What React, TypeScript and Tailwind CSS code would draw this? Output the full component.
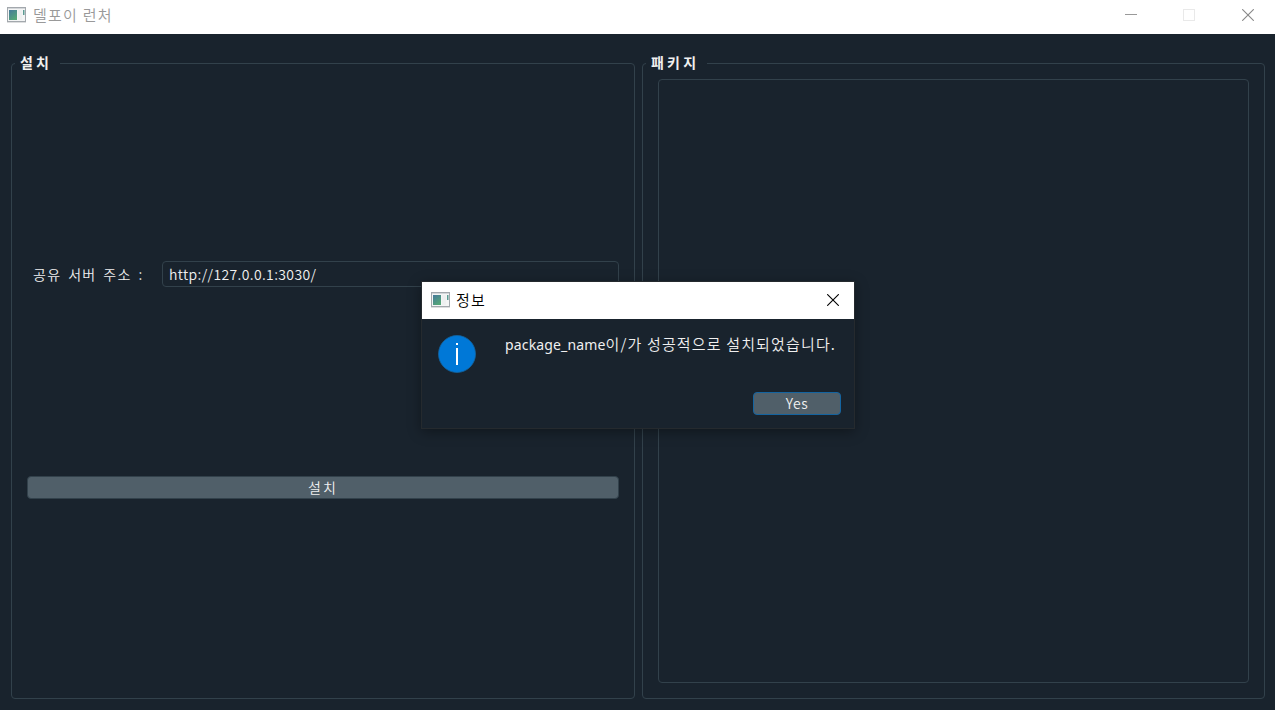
import type { ReactNode } from "react";

function AppIcon() {
  return (
    <svg width="20" height="17" viewBox="0 0 20 17" className="shrink-0" aria-hidden="true">
      <defs>
        <linearGradient id="pane" x1="0" y1="0" x2="0.6" y2="1">
          <stop offset="0" stopColor="#46799b" />
          <stop offset="1" stopColor="#55a678" />
        </linearGradient>
      </defs>
      <rect x="0" y="15" width="19" height="1" fill="#dddedf" />
      <rect x="0.5" y="0.5" width="18" height="14" fill="#f4f5f5" stroke="#a3a8ad" />
      <rect x="1" y="1" width="17" height="1" fill="#d3d6d9" />
      <rect x="2" y="3" width="8" height="10" fill="url(#pane)" />
      <rect x="11" y="3" width="4" height="10" fill="#eef0f0" />
      <rect x="16" y="3" width="1.5" height="5" fill="#5c9c93" />
    </svg>
  );
}

function CloseIcon({ color }: { color: string }) {
  return (
    <svg width="12" height="12" viewBox="0 0 12 12" fill="none" stroke={color} strokeWidth="1.1" aria-hidden="true">
      <path d="M0.2 0.2 11.8 11.8M11.8 0.2 0.2 11.8" />
    </svg>
  );
}

function GroupBox({ title, legend, className, children }: { title: string; legend: string; className: string; children: ReactNode }) {
  return (
    <section className={`flex h-[636px] flex-col rounded border border-[#32414b] ${className}`}>
      <h2 className={`-mt-[12px] ml-[3px] h-[23px] shrink-0 whitespace-nowrap bg-[#19232d] pl-[5px] text-[14px] leading-[20px] font-bold text-[#f0f0f0] ${legend}`}>
        {title}
      </h2>
      {children}
    </section>
  );
}

export default function App() {
  return (
    <div className="relative flex h-[710px] w-[1275px] flex-col overflow-hidden bg-[#19232d] font-['Noto_Sans_CJK_KR',sans-serif]">
      <header className="flex h-[34px] shrink-0 items-start bg-white pl-[7px] text-[#999]">
        <div className="pt-[7px]">
          <AppIcon />
        </div>
        <h1 className="ml-[6px] pt-[4px] text-[15px] leading-[22px] font-[350] tracking-[1.25px] whitespace-nowrap">델포이 런처</h1>
        <div className="ml-auto flex pt-[9px] pr-[21px]">
          <svg width="13" height="13" className="mr-[45px]" aria-hidden="true">
            <rect x="0" y="5" width="12" height="1" fill="#999" />
          </svg>
          <svg width="13" height="13" className="mr-[46px]" aria-hidden="true">
            <rect x="0.5" y="0.5" width="11" height="11" fill="none" stroke="#e9e9e9" />
          </svg>
          <CloseIcon color="#888" />
        </div>
      </header>

      <main className="flex gap-[7px] pt-[29px] pl-[11px]">
        <GroupBox title="설치" className="w-[624px]" legend="w-[45px] tracking-[3.2px]">
          <div className="mt-[186px] flex h-[26px] items-center px-[15px]">
            <label htmlFor="server" className="w-[135px] pl-[6px] text-[14px] leading-[20px] font-[350] tracking-[1.3px] [word-spacing:2.4px] whitespace-pre text-[#f0f0f0]">
              공유 서버 주소 :
            </label>
            <input
              id="server"
              readOnly
              defaultValue="http://127.0.0.1:3030/"
              className="h-[26px] w-[457px] rounded border border-[#32414b] bg-[#19232d] px-[6px] text-[14px] font-[350] tracking-[0.37px] text-[#f0f0f0] outline-none"
            />
          </div>
          <button className="mx-[15px] mt-[189px] h-[23px] rounded border border-[#32414b] bg-[#505f69] pb-[2px] text-[14px] leading-[18px] font-[350] tracking-[2px] text-[#f0f0f0]">
            설치
          </button>
        </GroupBox>
        <GroupBox title="패키지" className="w-[623px]" legend="w-[61px] tracking-[3.2px]">
          <div className="mx-[15px] mt-[4px] h-[604px] rounded border border-[#32414b]" />
        </GroupBox>
      </main>

      <div role="dialog" className="absolute top-[281px] left-[421px] flex h-[148px] w-[434px] flex-col border border-[#252a2e] bg-[#19232d] shadow-[0_3px_12px_rgba(0,0,0,0.35)]">
        <div className="flex h-[37px] shrink-0 items-center bg-white pr-[15px] pl-[9px]">
          <AppIcon />
          <span className="-mt-[2px] ml-[5px] text-[15px] leading-[22px] font-[350] tracking-[1.2px] text-black">정보</span>
          <div className="-mt-[2px] ml-auto">
            <CloseIcon color="#000" />
          </div>
        </div>
        <div className="flex pt-[16px] pl-[16px]">
          <svg width="38" height="38" viewBox="0 0 38 38" className="shrink-0" aria-hidden="true">
            <circle cx="19" cy="19" r="18.5" fill="#0078d7" stroke="#1464a0" strokeWidth="0.8" />
            <rect x="18" y="8" width="2" height="2" fill="#fff" />
            <rect x="18" y="13" width="2" height="17" fill="#fff" />
          </svg>
          <p className="ml-[29px] -mt-[2px] text-[15px] leading-[22px] font-[350] tracking-[1.15px] whitespace-nowrap text-[#f0f0f0]">
            <span className="font-['Noto_Sans',sans-serif] text-[14px] font-normal tracking-[0.15px]">package_name</span>이/가 성공적으로 설치되었습니다.
          </p>
        </div>
        <button className="mt-[19px] mr-[13px] h-[23px] w-[88px] self-end rounded border border-[#1464a0] bg-[#505f69] pb-[2px] text-[14px] leading-[18px] font-[350] tracking-[0.6px] text-[#f0f0f0]">
          Yes
        </button>
      </div>
    </div>
  );
}
